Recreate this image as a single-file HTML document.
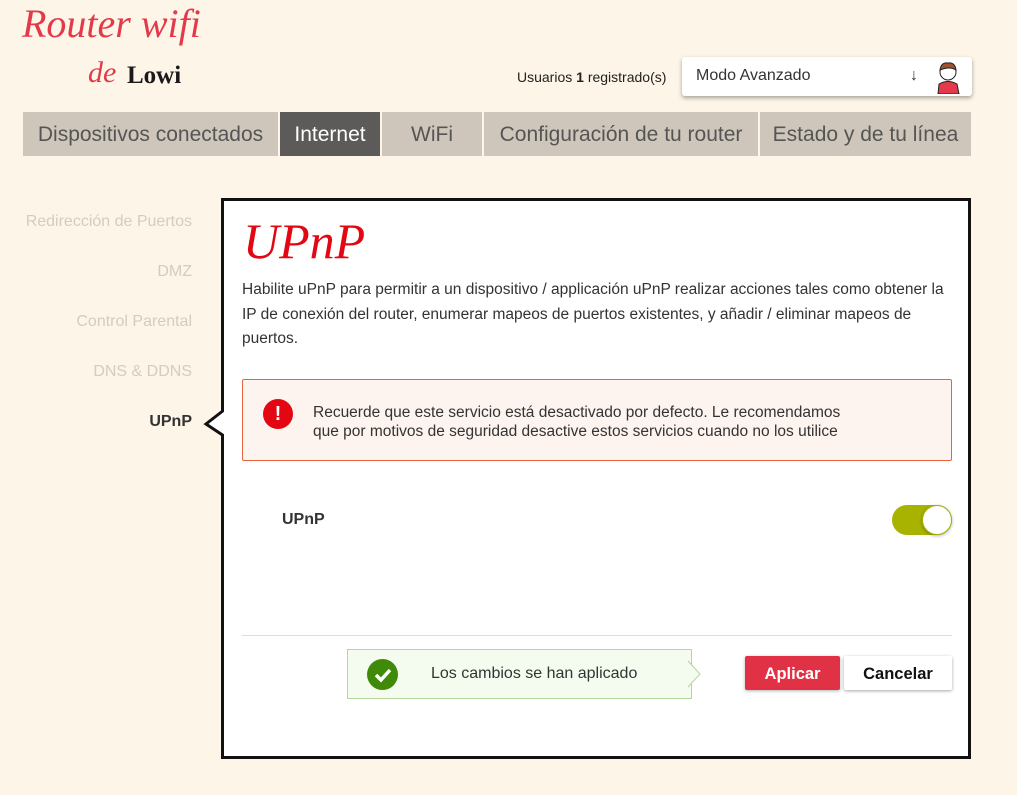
<!DOCTYPE html>
<html><head><meta charset="utf-8"><style>
body{margin:0;width:1017px;height:795px;background:#fdf5e7;font-family:"Liberation Sans",sans-serif;position:relative;overflow:hidden}
.a{position:absolute}
.tab{position:absolute;top:112px;height:44px;background:#cfc6bb;color:#555;font-size:21px;line-height:46px;text-align:center}
.nav{position:absolute;right:825px;font-size:16px;color:#d3ccc2;text-align:right;white-space:nowrap}
</style></head><body>
<div class="a" style="left:22px;top:0px;font-family:'Liberation Serif',serif;font-style:italic;font-size:40px;color:#e23a4a">Router wifi</div>
<div class="a" style="left:88px;top:56px;font-family:'Liberation Serif',serif;font-style:italic;font-size:30px;color:#e23a4a">de</div>
<div class="a" style="left:127px;top:62px;font-family:'Liberation Serif',serif;font-weight:bold;font-size:25px;color:#1a1a1a">Lowi</div>
<div class="a" style="left:517px;top:69px;font-size:14px;color:#222">Usuarios <b>1</b> registrado(s)</div>
<div class="a" style="left:682px;top:57px;width:290px;height:39px;background:#fff;border-radius:3px;box-shadow:0 2px 4px rgba(0,0,0,.35)">
<span class="a" style="left:14px;top:10px;font-size:16px;color:#333">Modo Avanzado</span>
<span class="a" style="left:228px;top:10px;font-size:16px;color:#333;font-weight:bold">↓</span>
<svg class="a" style="left:250px;top:1px" width="32" height="36" viewBox="0 0 32 36"><path d="M6 36 L7 26 Q16 21 25 26 L27 36Z" fill="#e23a4a" stroke="#222"/><circle cx="16" cy="14" r="8" fill="#fff" stroke="#222"/><path d="M8 12 Q9 4 16 5 Q23 4 24 12 Q18 8 8 12Z" fill="#a0522d" stroke="#222"/></svg>
</div>
<div class="tab" style="left:23px;width:255px">Dispositivos conectados</div>
<div class="tab" style="left:280px;width:100px;background:#5d5b59;color:#fff">Internet</div>
<div class="tab" style="left:382px;width:100px">WiFi</div>
<div class="tab" style="left:484px;width:274px">Configuración de tu router</div>
<div class="tab" style="left:760px;width:211px">Estado y de tu línea</div>
<div class="nav" style="top:213px">Redirección de Puertos</div>
<div class="nav" style="top:263px">DMZ</div>
<div class="nav" style="top:313px">Control Parental</div>
<div class="nav" style="top:363px">DNS &amp; DDNS</div>
<div class="nav" style="top:413px;color:#333;font-weight:bold">UPnP</div>
<div class="a" style="left:221px;top:198px;width:744px;height:555px;background:#fff;border:3px solid #111"></div>
<svg class="a" style="left:203px;top:408px" width="24" height="30"><path d="M21 2 L3 16 L21 28" fill="#fff" stroke="#111" stroke-width="3"/><rect x="21" y="0" width="4" height="30" fill="#fff"/></svg>
<div class="a" style="left:243px;top:212px;font-family:'Liberation Serif',serif;font-style:italic;font-size:50px;color:#e30613">UPnP</div>
<div class="a" style="left:242px;top:278px;width:712px;font-size:15.5px;line-height:24.5px;color:#333">Habilite uPnP para permitir a un dispositivo / applicación uPnP realizar acciones tales como obtener la IP de conexión del router, enumerar mapeos de puertos existentes, y añadir / eliminar mapeos de puertos.</div>
<div class="a" style="left:242px;top:379px;width:708px;height:80px;background:#fdf3ef;border:1px solid #e8643c;border-radius:2px"></div>
<div class="a" style="left:263px;top:399px;width:30px;height:30px;border-radius:50%;background:#e30613;color:#fff;font-weight:bold;font-size:20px;text-align:center;line-height:30px">!</div>
<div class="a" style="left:313px;top:403px;font-size:15.5px;line-height:19px;color:#333">Recuerde que este servicio está desactivado por defecto. Le recomendamos<br>que por motivos de seguridad desactive estos servicios cuando no los utilice</div>
<div class="a" style="left:282px;top:511px;font-size:16px;font-weight:bold;color:#333">UPnP</div>
<div class="a" style="left:892px;top:505px;width:60px;height:30px;border-radius:15px;background:#a7b300"></div>
<div class="a" style="left:922px;top:505px;width:28px;height:28px;border-radius:50%;background:#fff;border:1px solid #a7b300;box-shadow:0 1px 3px rgba(0,0,0,.3)"></div>
<div class="a" style="left:242px;top:635px;width:710px;height:1px;background:#ddd"></div>
<div class="a" style="left:347px;top:649px;width:343px;height:48px;background:#f3fcee;border:1px solid #b9d39c"></div>
<svg class="a" style="left:687px;top:660px" width="16" height="28"><path d="M1 1 L13 14 L1 27" fill="#f3fcee" stroke="#b9d39c"/></svg>
<div class="a" style="left:367px;top:659px;width:31px;height:31px;border-radius:50%;background:#3f8a09"></div>
<svg class="a" style="left:367px;top:659px" width="31" height="31"><path d="M9 16 L14 21 L23 11" fill="none" stroke="#fff" stroke-width="3.5"/></svg>
<div class="a" style="left:431px;top:665px;font-size:16px;color:#333">Los cambios se han aplicado</div>
<div class="a" style="left:745px;top:656px;width:95px;height:34px;background:#e03244;border-radius:2px;color:#fff;font-weight:bold;font-size:16.5px;text-align:center;line-height:36px;box-shadow:0 1px 3px rgba(0,0,0,.3)">Aplicar</div>
<div class="a" style="left:844px;top:656px;width:108px;height:34px;background:#fff;border-radius:2px;color:#111;font-weight:bold;font-size:16.5px;text-align:center;line-height:36px;box-shadow:0 1px 3px rgba(0,0,0,.35)">Cancelar</div>
</body></html>
